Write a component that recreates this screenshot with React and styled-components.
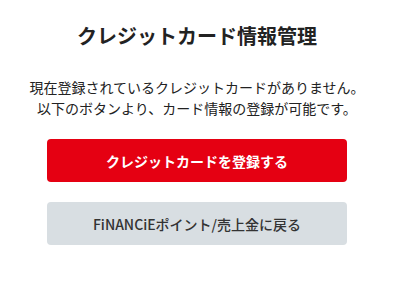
import React from "react";
import styled, { createGlobalStyle } from "styled-components";

const Global = createGlobalStyle`
  html, body { margin: 0; padding: 0; background: #fff; }
  body { font-family: "Noto Sans CJK JP", "Noto Sans", sans-serif; color: #222; }
`;

const Page = styled.main`
  width: 394px;
  height: 282px;
  display: flex;
  flex-direction: column;
  align-items: center;
  padding-top: 21px;
  box-sizing: border-box;
`;

const Title = styled.h1`
  margin: 0;
  font-size: 20px;
  line-height: 30px;
  font-weight: 700;
  color: #222;
  text-align: center;
`;

const Message = styled.p`
  margin: 26px 0 0;
  font-size: 14px;
  line-height: 21px;
  font-weight: 400;
  color: #222;
  text-align: center;
  white-space: nowrap;
`;

const Actions = styled.div`
  width: 300px;
  display: flex;
  flex-direction: column;
  gap: 20px;
  margin-top: 20px;
`;

const Button = styled.button`
  height: 43px;
  padding: 0;
  border: none;
  border-radius: 4px;
  font-family: inherit;
  font-size: 14px;
  line-height: 20px;
  font-weight: ${(p) => (p.$primary ? 700 : 500)};
  color: ${(p) => (p.$primary ? "#fff" : "#333")};
  background: ${(p) => (p.$primary ? "#e50012" : "#d8dee2")};
  cursor: pointer;
`;

export default function App() {
  return (
    <>
      <Global />
      <Page>
        <Title>クレジットカード情報管理</Title>
        <Message>
          現在登録されているクレジットカードがありません。
          <br />
          以下のボタンより、カード情報の登録が可能です。
        </Message>
        <Actions>
          <Button $primary>クレジットカードを登録する</Button>
          <Button>FiNANCiEポイント/売上金に戻る</Button>
        </Actions>
      </Page>
    </>
  );
}
